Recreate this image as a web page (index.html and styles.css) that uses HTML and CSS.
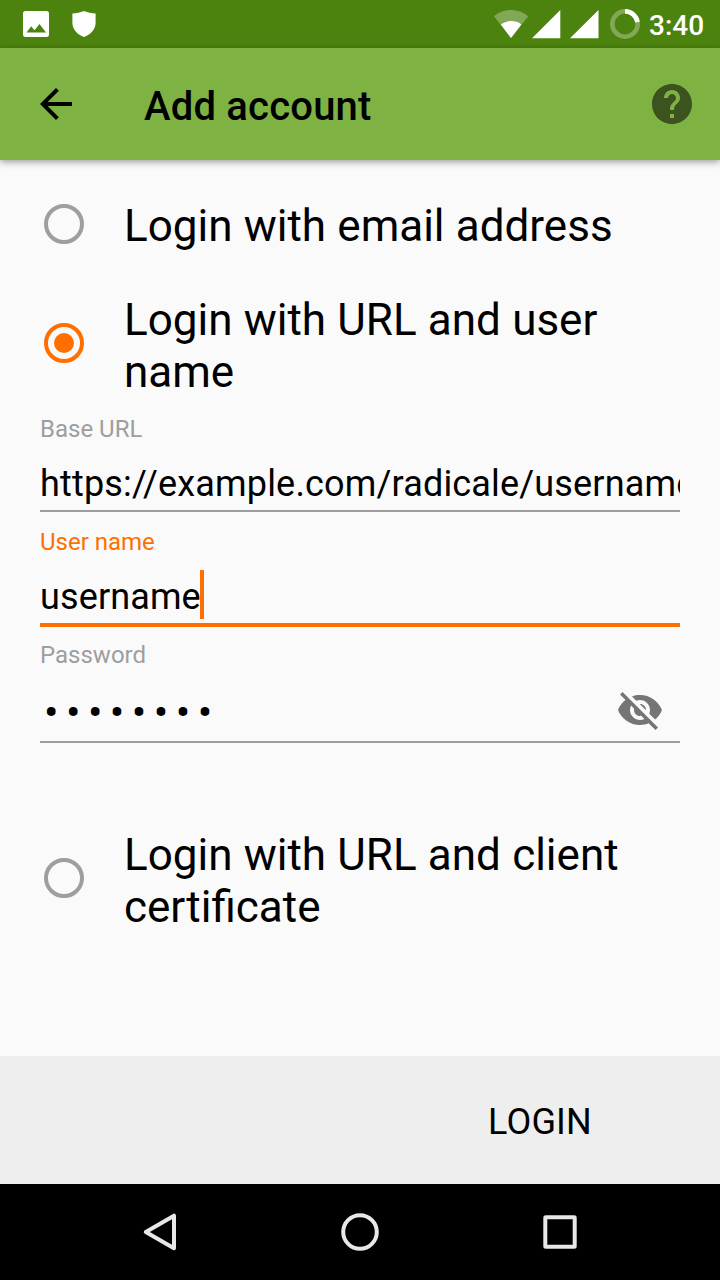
FILE: index.html
```html
<!DOCTYPE html>
<html lang="en">
<head>
<meta charset="utf-8">
<title>Add account</title>
<link rel="stylesheet" href="styles.css">
</head>
<body>
<div class="status">
  <svg class="status-left" width="100" height="48" viewBox="0 0 100 48">
    <path fill="#fff" fill-rule="evenodd" d="M25.500 11h21a2.500 2.500 0 0 1 2.500 2.500v21a2.500 2.500 0 0 1-2.500 2.500h-21a2.500 2.500 0 0 1-2.500-2.500v-21a2.500 2.500 0 0 1 2.500-2.500zM26.500 32.500h19.500l-6.500-8.500-5 6.300-3.300-4z"/>
    <path fill="#fff" d="M84 11c4 1.800 7.500 2.300 11.600 2.500v9.500c0 6-5 12-11.600 14-6.600-2-11.600-8-11.600-14v-9.500c4.100-.2 7.600-.7 11.600-2.500z"/>
  </svg>
  <svg class="status-right" width="150" height="48" viewBox="490 0 150 48">
    <path fill="#fff" fill-opacity=".3" d="M494 16.200c10-8.200 24-8.200 34.200 0L511 38z"/>
    <path fill="#fff" d="M500.800 24.400c6-4.400 14.500-4.400 20.600 0L511 38z"/>
    <path fill="#fff" d="M532 38.300L560.300 10v28.300zM570 38.300L598.500 10v28.300z"/>
    <circle cx="625" cy="24" r="12.700" fill="none" stroke="#fff" stroke-opacity=".3" stroke-width="4.600"/>
    <path fill="none" stroke="#fff" stroke-width="4.600" d="M625 11.300a12.700 12.700 0 0 1 12.500 10.900"/>
  </svg>
  <span class="clock">3:40</span>
</div>
<header class="appbar">
  <svg width="48" height="48" viewBox="0 0 24 24"><path d="M20 11H7.830l5.590-5.590L12 4l-8 8 8 8 1.410-1.410L7.830 13H20v-2z"/></svg>
  <h1 class="title">Add account</h1>
  <svg width="48" height="48" viewBox="0 0 24 24"><path fill="#3c531f" d="M12 2C6.480 2 2 6.480 2 12s4.480 10 10 10 10-4.480 10-10S17.520 2 12 2zm1 17h-2v-2h2v2zm2.070-7.750l-.9.920C13.450 12.900 13 13.500 13 15h-2v-.5c0-1.100.45-2.100 1.170-2.830l1.240-1.260c.37-.36.59-.86.590-1.410 0-1.100-.9-2-2-2s-2 .9-2 2H8c0-2.210 1.790-4 4-4s4 1.790 4 4c0 .88-.36 1.680-.93 2.250z"/></svg>
</header>
<main class="content">
  <div class="option option-email"><span class="radio"></span><span class="option-text">Login with email address</span></div>
  <div class="option option-url"><span class="radio checked"></span><span class="option-text">Login with URL and user name</span></div>
  <div class="field">
    <div class="label">Base URL</div>
    <div class="value url">https://example.com/radicale/username/</div>
  </div>
  <div class="field focused">
    <div class="label">User name</div>
    <div class="value"><span>username</span><i class="caret"></i></div>
  </div>
  <div class="field password">
    <div class="label">Password</div>
    <div class="value"><span class="dots">••••••••</span>
      <svg width="48" height="48" viewBox="0 0 24 24"><path fill="#757575" d="M12 7c2.760 0 5 2.240 5 5 0 .65-.13 1.260-.36 1.830l2.920 2.920c1.510-1.260 2.700-2.890 3.430-4.750-1.730-4.390-6-7.500-11-7.500-1.400 0-2.740.25-3.980.7l2.160 2.160C10.740 7.130 11.350 7 12 7zM2 4.270l2.280 2.280.46.46C3.080 8.300 1.780 10.020 1 12c1.730 4.390 6 7.500 11 7.500 1.550 0 3.030-.3 4.380-.84l.42.42L19.730 22 21 20.730 3.270 3 2 4.270zM7.530 9.800l1.550 1.550c-.05.21-.08.43-.08.65 0 1.660 1.340 3 3 3 .22 0 .44-.03.65-.08l1.550 1.550c-.67.33-1.410.53-2.200.53-2.760 0-5-2.240-5-5 0-.79.2-1.530.53-2.200zm4.310-.78l3.150 3.150.02-.16c0-1.660-1.340-3-3-3l-.17.01z"/></svg>
    </div>
  </div>
  <div class="option option-cert"><span class="radio"></span><span class="option-text">Login with URL and client certificate</span></div>
</main>
<footer class="actions"><span class="login">LOGIN</span></footer>
<nav class="navbar">
  <svg width="40" height="40" viewBox="0 0 40 40"><path d="M5.800 20L34 3.700v32.600z"/></svg>
  <svg width="40" height="40" viewBox="0 0 40 40"><circle cx="20" cy="20" r="16.800"/></svg>
  <svg width="40" height="40" viewBox="0 0 40 40"><rect x="5.300" y="5.300" width="29.400" height="29.400" rx=".5"/></svg>
</nav>
</body>
</html>
```
FILE: styles.css
```css
* { box-sizing: border-box; }
body {
  margin: 0;
  width: 720px;
  height: 1280px;
  display: flex;
  flex-direction: column;
  overflow: hidden;
  background: #fafafa;
  color: #000;
  font-family: Roboto, sans-serif;
}
svg { display: block; flex: none; }
.status {
  height: 48px;
  flex: none;
  display: flex;
  background: #4c830e;
}
.status-right { margin-left: auto; }
.clock {
  width: 80px;
  padding-left: 9px;
  color: #fff;
  font-size: 28px;
  font-weight: 500;
  line-height: 52px;
}
.appbar {
  height: 112px;
  flex: none;
  display: flex;
  align-items: center;
  padding: 0 24px 0 32px;
  background: #7eb343;
  box-shadow: 0 2px 7px rgba(0, 0, 0, .38);
}
.title {
  flex: 1;
  margin: 6px 0 0 64px;
  font-size: 40px;
  font-weight: 500;
  line-height: 48px;
  letter-spacing: .2px;
}
.content {
  height: 896px;
  flex: none;
  padding: 40px 40px 0;
}
.option { display: flex; }
.option-text {
  width: 520px;
  margin-left: 40px;
  font-size: 44px;
  line-height: 52px;
  word-spacing: .3px;
}
.radio {
  width: 40px;
  height: 40px;
  flex: none;
  display: grid;
  place-items: center;
  margin: 4px 0 0 4px;
  border: 4px solid #9e9e9e;
  border-radius: 50%;
}
.radio.checked { border-color: #ff6f00; }
.radio.checked::after {
  content: "";
  width: 20px;
  height: 20px;
  border-radius: 50%;
  background: #ff6f00;
}
.option-url { margin-top: 42px; }
.option-url .radio, .option-cert .radio { margin-top: 29px; }
.option-cert { margin-top: 86px; }
.field { height: 113px; padding-top: 17px; }
.option-url + .field { height: 114px; }
.label {
  color: #9e9e9e;
  font-size: 24px;
  line-height: 28px;
}
.value {
  height: 69px;
  display: flex;
  padding-top: 13px;
  overflow: hidden;
  border-bottom: 2px solid #9e9e9e;
  font-size: 36px;
  line-height: 56px;
  letter-spacing: .12px;
  white-space: nowrap;
}
.url { letter-spacing: .17px; }
.focused { height: 115px; padding-top: 16px; }
.focused .label { color: #ff6f00; }
.focused .value {
  height: 71px;
  border-bottom: 4px solid #ff6f00;
}
.caret {
  width: 4px;
  height: 49px;
  margin: 1px 0 0 -1px;
  background: #ff6f00;
}
.password { height: 116px; padding-top: 14px; }
.password .value {
  height: 74px;
  justify-content: space-between;
  padding: 17px 16px 0 0;
}
.dots {
  margin-left: 4px;
  font-size: 43px;
  line-height: 52px;
  letter-spacing: 7.450px;
}
.actions {
  height: 128px;
  flex: none;
  display: flex;
  justify-content: flex-end;
  padding: 44px 128px 0 0;
  background: #eee;
}
.login { font-size: 36px; line-height: 44px; letter-spacing: .2px; }
.navbar {
  height: 96px;
  flex: none;
  display: flex;
  align-items: center;
  justify-content: center;
  gap: 160px;
  background: #000;
}
.navbar path, .navbar circle, .navbar rect {
  fill: none;
  stroke: #e8e8e8;
  stroke-width: 4;
  stroke-linejoin: round;
}
```
